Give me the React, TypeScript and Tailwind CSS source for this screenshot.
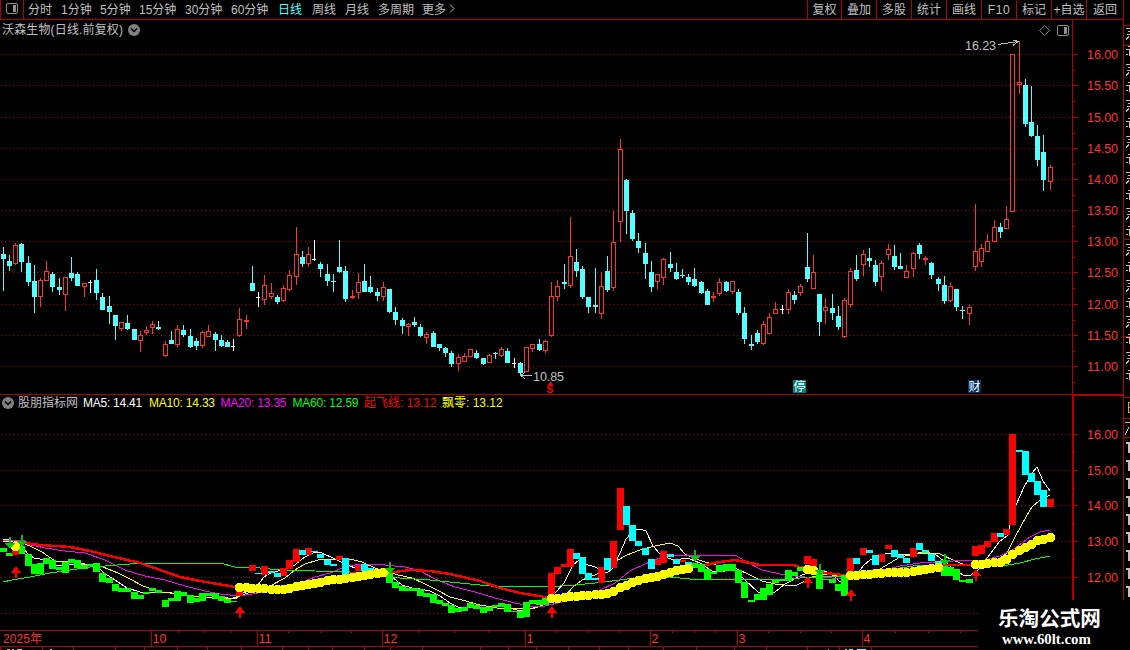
import { Fragment } from 'react';

type Kind = 'up' | 'down' | 'flat';
type Candle = [x: number, high: number, top: number, bottom: number, low: number, kind: Kind];
type Point = [number, number];

const U = 'up';
const D = 'down';
const F = 'flat';

const candles: Candle[] = [
    [3, 247, 254, 259, 291, D], [9, 255, 261, 266, 271, D], [15, 243, 245, 264, 265, U], [21, 243, 244, 262, 272, D],
    [28, 256, 263, 282, 286, D], [34, 265, 281, 297, 313, D], [40, 278, 280, 297, 307, U], [46, 261, 271, 281, 281, U],
    [52, 272, 274, 287, 292, D], [59, 278, 287, 290, 295, D], [65, 277, 277, 295, 311, U], [71, 257, 273, 278, 281, D],
    [77, 272, 274, 286, 286, D], [84, 283, 283, 287, 297, U], [90, 280, 282, 283, 293, F], [96, 269, 280, 293, 300, D],
    [102, 293, 297, 310, 310, D], [109, 296, 306, 312, 324, D], [115, 315, 315, 326, 340, D], [121, 322, 322, 329, 331, U],
    [127, 315, 323, 329, 330, D], [134, 329, 329, 340, 340, D], [140, 331, 335, 341, 352, U], [146, 326, 330, 333, 335, U],
    [152, 321, 324, 328, 334, U], [158, 321, 327, 329, 330, D], [165, 341, 344, 356, 357, U], [171, 331, 340, 344, 344, D],
    [177, 325, 329, 345, 347, U], [183, 325, 330, 335, 337, D], [190, 329, 336, 347, 348, D], [196, 338, 341, 346, 350, D],
    [202, 331, 332, 346, 348, U], [208, 325, 331, 337, 337, U], [215, 332, 334, 340, 351, D], [221, 335, 340, 346, 347, D],
    [227, 340, 342, 347, 347, D], [233, 339, 346, 347, 351, F], [239, 308, 319, 336, 337, U], [246, 315, 320, 322, 329, U],
    [252, 266, 283, 291, 291, D], [258, 292, 297, 298, 307, F], [264, 275, 285, 300, 305, U], [271, 283, 293, 297, 299, U],
    [277, 295, 297, 302, 304, D], [283, 285, 288, 301, 302, U], [289, 270, 275, 290, 291, U], [296, 227, 254, 277, 285, U],
    [302, 251, 257, 264, 267, D], [308, 247, 254, 264, 267, U], [314, 240, 259, 260, 261, F], [320, 262, 264, 269, 277, D],
    [327, 264, 274, 281, 286, D], [333, 274, 281, 282, 292, D], [339, 240, 267, 272, 273, D], [345, 266, 271, 299, 302, D],
    [352, 290, 296, 298, 299, U], [358, 273, 282, 293, 299, U], [364, 264, 281, 292, 292, D], [370, 276, 287, 292, 293, D],
    [377, 288, 292, 296, 301, D], [383, 282, 287, 297, 301, U], [389, 289, 289, 312, 313, D], [395, 307, 312, 320, 325, D],
    [402, 318, 320, 326, 334, D], [408, 323, 324, 327, 336, U], [414, 317, 322, 325, 327, D], [420, 324, 327, 336, 337, D],
    [426, 332, 334, 338, 344, U], [433, 331, 333, 347, 347, D], [439, 344, 344, 348, 351, D], [445, 347, 348, 353, 357, D],
    [451, 351, 353, 364, 367, D], [458, 354, 357, 364, 371, U], [464, 353, 356, 362, 362, U], [470, 349, 349, 357, 357, U],
    [476, 350, 353, 358, 359, D], [483, 358, 358, 364, 365, D], [489, 354, 355, 363, 363, U], [495, 352, 353, 354, 359, D],
    [501, 347, 349, 356, 357, U], [507, 348, 351, 363, 363, D], [514, 358, 363, 364, 368, F], [520, 362, 363, 373, 375, D],
    [526, 347, 347, 372, 372, U], [532, 344, 344, 349, 352, U], [539, 339, 344, 350, 351, D], [545, 340, 341, 351, 353, U],
    [551, 282, 296, 336, 337, U], [557, 280, 286, 297, 301, U], [564, 264, 282, 284, 289, D], [570, 217, 256, 286, 288, U],
    [576, 249, 262, 271, 277, D], [582, 266, 269, 297, 299, D], [588, 297, 297, 307, 313, D], [595, 268, 305, 307, 313, D],
    [601, 272, 286, 314, 319, U], [607, 256, 271, 290, 292, D], [613, 211, 242, 288, 291, U], [620, 139, 149, 222, 242, U],
    [626, 179, 180, 211, 234, D], [632, 210, 213, 239, 241, D], [638, 233, 241, 248, 253, D], [645, 243, 253, 264, 279, D],
    [651, 261, 272, 287, 292, D], [657, 274, 274, 282, 289, U], [663, 258, 259, 278, 285, U], [670, 252, 264, 268, 272, D],
    [676, 263, 272, 279, 280, D], [682, 269, 275, 276, 278, D], [688, 274, 277, 282, 285, D], [694, 268, 279, 286, 287, D],
    [701, 281, 282, 293, 294, D], [707, 289, 291, 305, 305, D], [713, 292, 296, 298, 302, U], [719, 278, 282, 294, 296, U],
    [726, 281, 282, 291, 292, D], [732, 281, 281, 292, 294, U], [738, 289, 292, 313, 315, D], [744, 307, 313, 339, 344, D],
    [751, 335, 344, 346, 350, D], [757, 330, 333, 342, 344, D], [763, 321, 324, 344, 345, U], [769, 313, 317, 334, 334, U],
    [775, 302, 309, 314, 314, U], [782, 305, 309, 310, 314, F], [788, 289, 292, 310, 314, U], [794, 291, 295, 300, 304, D],
    [800, 284, 286, 293, 296, U], [807, 233, 267, 279, 282, D], [813, 255, 272, 289, 289, U], [819, 294, 294, 322, 336, D],
    [825, 298, 307, 311, 324, U], [832, 294, 308, 313, 320, D], [838, 306, 316, 327, 330, D], [844, 298, 300, 337, 338, U],
    [850, 268, 271, 305, 307, U], [856, 255, 270, 279, 281, D], [863, 250, 254, 265, 276, U], [869, 248, 258, 261, 267, D],
    [875, 260, 265, 282, 286, D], [881, 261, 263, 277, 291, U], [888, 244, 249, 255, 260, U], [894, 245, 256, 267, 270, D],
    [900, 253, 266, 269, 269, D], [906, 265, 271, 278, 278, U], [913, 252, 253, 269, 277, U], [919, 243, 245, 254, 259, D],
    [925, 256, 258, 260, 265, U], [931, 262, 263, 275, 279, D], [938, 277, 279, 284, 291, D], [944, 276, 285, 301, 304, D],
    [950, 283, 286, 301, 302, U], [956, 289, 289, 307, 311, D], [962, 306, 310, 311, 319, D], [969, 305, 307, 314, 325, U],
    [975, 204, 251, 267, 271, U], [981, 244, 248, 262, 267, U], [987, 234, 241, 252, 252, U], [994, 220, 227, 242, 242, U],
    [1000, 223, 227, 232, 238, D], [1006, 206, 219, 229, 229, U], [1012, 54, 54, 212, 212, U], [1019, 41, 82, 85, 94, U],
    [1025, 79, 85, 124, 127, D], [1031, 86, 122, 136, 137, D], [1037, 125, 136, 160, 166, D], [1043, 135, 152, 180, 191, D],
    [1050, 165, 167, 182, 190, U],
];

// close-to-close blocks of the indicator pane: x, top, bottom
const greenBlocks = [
    [3, 548, 552], [9, 553, 556], [21, 546, 554], [28, 554, 566], [34, 564, 574], [40, 563, 574], [46, 558, 564], [52, 560, 569],
    [59, 567, 570], [65, 562, 573], [71, 559, 563], [77, 560, 568], [84, 565, 569], [90, 564, 566], [96, 563, 572], [102, 573, 582],
    [109, 578, 583], [115, 584, 591], [121, 588, 592], [127, 588, 592], [134, 592, 599], [140, 595, 599], [146, 592, 594],
    [152, 588, 591], [158, 590, 593], [165, 600, 607], [171, 598, 601], [177, 591, 601], [183, 592, 596], [190, 595, 603],
    [196, 598, 602], [202, 593, 601], [208, 593, 596], [215, 593, 599], [221, 596, 601], [227, 599, 603], [233, 601, 602],
    [389, 573, 583], [395, 582, 588], [402, 586, 591], [408, 588, 591], [414, 588, 591], [420, 589, 596], [426, 593, 597],
    [433, 594, 603], [439, 600, 604], [445, 603, 606], [451, 605, 613], [458, 608, 612], [464, 607, 611], [470, 603, 608],
    [476, 605, 609], [483, 607, 613], [489, 607, 611], [495, 605, 607], [501, 603, 607], [507, 604, 612], [514, 611, 612],
    [520, 611, 618], [526, 602, 617], [532, 600, 604], [539, 600, 605], [545, 598, 605], [694, 563, 568], [701, 564, 572],
    [707, 569, 579], [713, 572, 574], [719, 565, 572], [726, 564, 571], [732, 564, 571], [738, 570, 583], [744, 582, 598],
    [751, 600, 602], [757, 594, 600], [763, 588, 600], [769, 584, 595], [775, 580, 583], [782, 580, 581], [788, 570, 581],
    [794, 572, 576], [800, 567, 571], [819, 572, 589], [825, 579, 580], [832, 579, 583], [838, 584, 591], [844, 575, 596],
    [944, 566, 576], [950, 567, 576], [956, 569, 580], [962, 580, 582], [969, 579, 583],
];
const redBlocks = [
    [15, 548, 555], [239, 588, 596], [252, 565, 571], [264, 566, 575], [283, 568, 576], [289, 560, 569], [296, 549, 562],
    [308, 548, 555], [339, 556, 560], [352, 572, 574], [358, 565, 571], [383, 568, 572], [551, 573, 596], [557, 567, 574],
    [564, 564, 567], [570, 549, 567], [601, 567, 583], [613, 541, 568], [620, 488, 530], [657, 560, 565], [663, 551, 563],
    [682, 560, 562], [807, 556, 564], [813, 559, 568], [850, 558, 572], [863, 548, 555], [881, 554, 562], [888, 545, 549],
    [913, 548, 557], [975, 546, 556], [981, 545, 554], [987, 541, 547], [994, 533, 542], [1006, 529, 535], [1012, 434, 525],
    [1050, 499, 507],
];
const cyanBlocks = [
    [258, 573, 574], [271, 571, 573], [277, 573, 577], [302, 550, 555], [314, 551, 552], [320, 554, 558], [327, 560, 565],
    [333, 564, 566], [345, 558, 575], [364, 564, 571], [370, 568, 571], [377, 570, 573], [576, 553, 559], [582, 557, 574],
    [588, 573, 580], [595, 578, 580], [607, 558, 570], [626, 506, 525], [632, 525, 541], [638, 541, 546], [645, 548, 555],
    [651, 559, 569], [670, 554, 557], [676, 559, 564], [688, 562, 565], [856, 558, 564], [869, 550, 553], [875, 555, 565],
    [894, 550, 557], [900, 555, 558], [906, 558, 563], [919, 543, 550], [925, 550, 553], [931, 554, 561], [938, 561, 565],
    [1000, 533, 537], [1019, 450, 452], [1025, 451, 475], [1031, 473, 482], [1037, 481, 495], [1043, 490, 507],
];

const ma5 = '3,542 10,541 20,544 28,554 34,558 46,560 58,566 78,564 96,565 104,573 115,580 127,588 140,592 165,592 178,594 190,596 202,597 215,597 228,598 236,599 243,593 252,590 258,585 264,577 272,572 285,570 295,565 302,559 310,554 316,552 322,553 333,558 345,564 355,568 365,569 375,570 385,572 392,577 402,585 412,588 420,589 430,591 440,596 450,603 460,608 475,607 490,607 500,605 510,608 520,611 530,609 540,606 548,600 556,592 564,583 573,565 579,560 585,564 595,567 602,571 607,573 613,568 620,553 626,539 634,530 640,529 646,531 653,546 660,554 668,558 676,561 683,558 690,559 700,563 712,571 725,571 735,570 745,580 758,592 765,595 775,592 785,584 800,576 812,571 825,571 835,577 840,582 848,580 856,575 864,565 870,560 878,556 888,553 900,555 912,554 925,552 935,554 945,562 955,570 963,575 970,576 978,570 988,557 1000,541 1007,536 1010,525 1016,505 1024,487 1032,473 1037,467 1043,481 1050,491';
const ma10 = '3,539 20,542 30,546 42,552 55,561 70,562 85,564 103,567 118,573 130,579 143,586 160,592 180,594 200,597 230,599 243,595 255,590 270,586 285,578 295,570 305,564 318,560 335,559 350,559 362,562 375,568 388,572 398,575 412,578 425,584 437,590 450,597 462,600 480,605 497,608 520,609 535,608 545,604 566,595 573,587 582,580 595,575 607,568 618,560 627,555 640,550 655,546 670,543 678,546 685,554 693,558 705,562 720,566 735,568 750,575 762,581 775,584 795,586 803,582 812,577 825,574 840,576 855,573 880,569 890,563 900,557 920,553 940,554 955,561 963,564 975,565 995,562 1007,553 1015,537 1027,515 1032,507 1040,500 1050,495';
const ma20 = '3,540 25,541 27,544 45,548 65,551 85,553 105,560 125,570 145,576 165,580 185,586 205,591 220,594 240,596 258,593 275,590 300,583 315,577 330,573 345,567 360,564 385,565 405,567 420,571 435,579 455,587 475,592 495,598 515,603 530,606 545,606 562,602 575,596 600,590 615,583 630,571 645,564 665,556 680,555 735,555 745,561 762,570 785,575 805,577 858,579 880,571 900,566 920,563 947,562 960,560 985,560 1000,556 1014,549 1030,537 1040,532 1050,530';
const ma60 = '3,582 12,580 30,577 50,573 70,570 90,567 105,566 130,564 150,563 220,563 235,567 250,567 280,570 350,572 380,575 400,578 430,580 460,583 490,586 545,587 575,585 605,582 635,578 670,577 690,579 735,579 780,580 800,578 846,576 860,571 880,571 900,568 920,565 1008,565 1020,563 1035,559 1050,556';
const flyLines = [
    '25,543 40,545 70,547 90,551 110,556 140,563 160,570 180,577 200,581 235,587',
    '383,570 395,572 410,570 430,571 450,574 480,581 500,588 520,593 545,597 551,597',
    '705,565 720,562 735,560 745,562 760,565 793,565 800,567 807,568',
    '823,573 835,574 850,576',
    '940,565 978,565',
];

// each segment gets one dot per candle between its first and last point
const dotSegments: Point[][] = [
    [[15, 546], [16, 546]],
    [[239, 587], [258, 588], [283, 589], [303, 585], [318, 582], [333, 579], [346, 578], [360, 576], [373, 574], [383, 572]],
    [[551, 598], [564, 597], [583, 595], [600, 594], [607, 593], [613, 591], [620, 587], [626, 585], [632, 582], [638, 580], [651, 577], [663, 574], [676, 570], [688, 568]],
    [[807, 569], [813, 570]],
    [[850, 575], [870, 574], [888, 572], [906, 572], [925, 569], [938, 567]],
    [[975, 564], [987, 563], [1000, 562], [1006, 559], [1012, 554], [1019, 550], [1025, 547], [1031, 544], [1037, 540], [1043, 539], [1050, 537]],
];

const buyArrows: Point[] = [[16, 566], [240, 606], [552, 606], [808, 576], [851, 589], [976, 569]];
const sellArrows: Point[] = [[10, 549], [22, 547], [390, 574], [695, 562], [820, 576], [945, 566]];

const priceTicks: [number, string][] = [
    [54, '16.00'], [85, '15.50'], [117, '15.00'], [148, '14.50'], [179, '14.00'], [210, '13.50'],
    [241, '13.00'], [272, '12.50'], [304, '12.00'], [335, '11.50'], [366, '11.00'],
];
const indicatorTicks: [number, string][] = [
    [434, '16.00'], [470, '15.00'], [505, '14.00'], [541, '13.00'], [577, '12.00'], [613, ''],
];
const months: [number, string][] = [[151, '10'], [257, '11'], [382, '12'], [525, '1'], [650, '2'], [737, '3'], [862, '4']];
const weekTicks = [178, 204, 231, 288, 320, 351, 418, 454, 489, 556, 588, 619, 672, 694, 715, 768, 800, 831, 895, 928, 960];
const footTicks = [0, 42, 73, 115, 144, 177, 207, 241, 282, 308, 332, 364, 390, 422, 480, 508, 536, 568, 599, 628, 663, 696, 734, 766, 807, 839, 871];

const periods = [
    { label: '分时', className: 'w-[33px]' },
    { label: '1分钟', className: 'w-[39px]' },
    { label: '5分钟', className: 'w-[39px]' },
    { label: '15分钟', className: 'w-[46px]' },
    { label: '30分钟', className: 'w-[46px]' },
    { label: '60分钟', className: 'w-[47px]' },
    { label: '日线', className: 'w-[34px] text-[#54ffff]' },
    { label: '周线', className: 'w-[33px]' },
    { label: '月线', className: 'w-[33px]' },
    { label: '多周期', className: 'w-[44px]' },
    { label: '更多', className: 'w-[27px]' },
];
const tools = [
    { label: '复权', className: 'w-[34px]' },
    { label: '叠加', className: 'w-[35px]' },
    { label: '多股', className: 'w-[35px]' },
    { label: '统计', className: 'w-[35px]' },
    { label: '画线', className: 'w-[35px]' },
    { label: 'F10', className: 'w-[35px] tracking-[0.6px]' },
    { label: '标记', className: 'w-[35px]' },
    { label: '+自选', className: 'w-[35px]' },
    { label: '返回', className: 'w-[37px]' },
];
const legend = [
    { label: '股朋指标网', className: 'w-[65px] text-[#c0c0c0]' },
    { label: 'MA5: 14.41', className: 'w-[66px] tracking-[-0.25px] text-white' },
    { label: 'MA10: 14.33', className: 'w-[71.5px] tracking-[-0.2px] text-[#ffff00]' },
    { label: 'MA20: 13.35', className: 'w-[72px] tracking-[-0.2px] text-[#ff00ff]' },
    { label: 'MA60: 12.59', className: 'w-[71.5px] tracking-[-0.2px] text-[#00ff00]' },
    { label: '起飞线: 13.12', className: 'w-[78px] text-[#ff0000]' },
    { label: '飘零: 13.12', className: 'text-[#ffff00]' },
];

const candleColor = { up: '#ff3232', down: '#54ffff', flat: '#ffffff' };

function yAt(points: Point[], x: number) {
    for (let i = 1; i < points.length; i++) {
        const [x0, y0] = points[i - 1];
        const [x1, y1] = points[i];
        if (x <= x1) return Math.round(y0 + ((x - x0) / (x1 - x0)) * (y1 - y0));
    }
    return points[points.length - 1][1];
}

function CandleShape({ candle }: { candle: Candle }) {
    const [x, high, top, bottom, low, kind] = candle;
    const color = candleColor[kind];
    const hollow = kind === 'up' && bottom - top > 2;
    return (
        <g fill={color}>
            <rect x={x} y={high} width={1} height={Math.max(low - high, 1)} />
            <rect x={x - 2} y={top} width={kind === 'flat' ? 4 : 5} height={bottom - top} />
            {hollow && <rect x={x - 1} y={top + 1} width={3} height={bottom - top - 2} fill="#000" />}
        </g>
    );
}

function Blocks({ data, color }: { data: number[][]; color: string }) {
    return (
        <g fill={color}>
            {data.map(([x, top, bottom]) => (
                <rect key={x} x={x - 3} y={top} width={7} height={bottom - top} />
            ))}
        </g>
    );
}

function PriceAxis({ ticks, minor }: { ticks: [number, string][]; minor: number }) {
    return (
        <>
            {ticks.map(([y, label]) => (
                <Fragment key={y}>
                    <line x1={1} x2={1072} y1={y + 0.5} y2={y + 0.5} stroke="#b00000" strokeDasharray="1 3" />
                    {label && <rect x={1072} y={y} width={6} height={1} fill="#b00000" />}
                    {y + minor < 600 && <rect x={1072} y={y + minor} width={3} height={1} fill="#b00000" />}
                    {label && (
                        <text x={1087} y={y + 5} fontSize={12.5} fill="#ff3232" textLength={31}>{label}</text>
                    )}
                </Fragment>
            ))}
        </>
    );
}

function PanelIcon({ className }: { className?: string }) {
    return (
        <svg width="12" height="11" viewBox="0 0 12 11" className={className}>
            <rect x="0.5" y="0.5" width="11" height="10" rx="1.5" fill="none" stroke="#909090" />
            <rect x="7" y="2" width="3" height="7" fill="#909090" />
        </svg>
    );
}

function DropIcon() {
    return (
        <svg width="12" height="12" viewBox="0 0 12 12">
            <circle cx="6" cy="6" r="6" fill="#808080" />
            <path d="M3 4.5 L6 7.5 L9 4.5" fill="none" stroke="#000" strokeWidth="1.5" />
        </svg>
    );
}

function Toolbar() {
    return (
        <div className="flex h-[20px] border-b border-[#b00000] leading-[20px] text-[#c0c0c0]">
            <div className="flex w-[24px] items-center justify-center border-x border-[#b00000] pb-[2px]">
                <PanelIcon />
            </div>
            <div className="flex flex-1 pl-[4px]">
                {periods.map((item) => (
                    <span key={item.label} className={item.className}>{item.label}</span>
                ))}
                <svg width="6" height="10" viewBox="0 0 6 10" className="mt-[4px]">
                    <path d="M1 0.5 L5 4.5 L1 8.5" fill="none" stroke="#c0c0c0" />
                </svg>
            </div>
            {tools.map((item) => (
                <div key={item.label} className={`flex justify-center border-l border-[#b00000] ${item.className}`}>{item.label}</div>
            ))}
        </div>
    );
}

function PriceChart() {
    return (
        <svg width="1123" height="354" viewBox="0 40 1123 354" shapeRendering="crispEdges" className="block">
            <PriceAxis ticks={priceTicks} minor={16} />
            <rect x={1072} y={40} width={1} height={354} fill="#b00000" />
            {candles.map((candle) => <CandleShape key={candle[0]} candle={candle} />)}
            <g fill="none" stroke="#c0c0c0">
                <path d="M998 44.5 L1018 41.5 M1012 39.5 L1018 41.5 L1013 45.5" />
                <path d="M532 375.5 H521 M525 372 L521 375.5 L525 379" />
            </g>
            <text x={965} y={50} fontSize={12.5} fill="#c0c0c0" textLength={31}>16.23</text>
            <text x={533} y={381} fontSize={12.5} fill="#c0c0c0" textLength={31}>10.85</text>
            <path d="M550 382 L547 385 H553 Z" fill="#ff0000" />
            <text x={546.5} y={393} fontSize={10} fontWeight="bold" fill="#ff0000">S</text>
            <rect x={793} y={380} width={13} height={13} fill="#008080" />
            <text x={793.5} y={391} fontSize={12} fill="#fff">停</text>
            <rect x={968} y={380} width={13} height={13} fill="#003366" />
            <text x={968.5} y={391} fontSize={12} fill="#fff">财</text>
        </svg>
    );
}

function IndicatorChart() {
    return (
        <svg width="1123" height="218" viewBox="0 412 1123 218" shapeRendering="crispEdges" className="block">
            <PriceAxis ticks={indicatorTicks} minor={18} />
            <rect x={1072} y={412} width={2} height={188} fill="#b00000" />
            <g fill="none">
                <polyline points={ma5} stroke="#fff" />
                <polyline points={ma10} stroke="#ffff00" />
                <polyline points={ma20} stroke="#ff00ff" />
                <polyline points={ma60} stroke="#00ff00" />
                {flyLines.map((points) => <polyline key={points} points={points} stroke="#ff0000" strokeWidth={2.4} />)}
            </g>
            <Blocks data={greenBlocks} color="#00ff00" />
            <Blocks data={redBlocks} color="#ff0000" />
            <Blocks data={cyanBlocks} color="#00ffff" />
            {dotSegments.map((segment) => candles
                .filter(([x]) => x >= segment[0][0] && x <= segment[segment.length - 1][0])
                .map(([x]) => <circle key={x} cx={x + 0.5} cy={yAt(segment, x) + 0.5} r={4.6} fill="#ffff00" />))}
            {buyArrows.map(([x, y]) => (
                <path key={x} d={`M${x} ${y} l5 7 h-4 v5 h-2 v-5 h-4 z`} fill="#ff0000" />
            ))}
            {sellArrows.map(([x, y]) => (
                <path key={x} d={`M${x} ${y} l5 -6 h-4 v-6 h-2 v6 h-4 z`} fill="#00c800" />
            ))}
        </svg>
    );
}

function TimeAxis() {
    return (
        <svg width="978" height="20" viewBox="0 630 978 20" shapeRendering="crispEdges" className="block">
            <g fill="#b00000">
                <rect x={0} y={630} width={978} height={1} />
                <rect x={0} y={646} width={978} height={1} />
                {months.map(([x]) => <rect key={x} x={x} y={631} width={1} height={15} />)}
                {weekTicks.map((x) => <rect key={x} x={x} y={631} width={1} height={2} />)}
                {footTicks.map((x) => <rect key={x} x={x} y={647} width={1} height={3} />)}
            </g>
            <text x={3} y={643} fontSize={12} fill="#ff3232" textLength={39}>2025年</text>
            {months.map(([x, label]) => (
                <text key={x} x={x + 1.5} y={643} fontSize={12.5} fill="#ff3232">{label}</text>
            ))}
            <path d="M7 649.5 h3 m2 0 h2 m3 0 h5 m28 0 h2 M828 649.5 h1 m16 0 h2 m2 0 h4" stroke="#c0c0c0" />
            <path d="M849 649.5 h4 m4 0 h9" stroke="#54ffff" />
        </svg>
    );
}

// the quote list is cut off by the window edge, only its first strokes are seen
function SideStrip() {
    const glyphs = Array.from({ length: 20 }, (_, i) => 28 + i * 18).filter((y) => y < 385);
    return (
        <svg width="7" height="650" viewBox="1123 0 7 650" shapeRendering="crispEdges" className="block">
            <rect x={1123} y={0} width={1} height={395} fill="#b00000" />
            <rect x={1122} y={395} width={2} height={205} fill="#b00000" />
            {[25, 45, 239, 336, 397, 418, 437].map((y) => <rect key={y} x={1124} y={y} width={6} height={1} fill="#b00000" />)}
            {glyphs.map((y, i) => (
                <path
                    key={y}
                    d={i % 2 === 0
                        ? `M1126 ${y + 0.5} h4 M1128 ${y + 3.5} h2 M1127 ${y + 6.5} h3 M1126 ${y + 11.5} l3 -3`
                        : `M1128 ${y + 0.5} h2 M1126 ${y + 3.5} h4 M1129.5 ${y + 3} v7 M1126 ${y + 8.5} h2`}
                    fill="none"
                    stroke="#c0c0c0"
                />
            ))}
            <path d="M1130 402.5 h-2 v10 h2 M1128 407.5 h2" fill="none" stroke="#c0c000" />
            <path d="M1125 422.5 h5 M1125 435 l4 -8" fill="none" stroke="#c0c0c0" />
            {[442, 460, 478, 496, 514, 532, 550, 568, 586].map((y) => (
                <path key={y} d={`M1126 ${y + 1} h3 v10`} fill="none" stroke="#c0c0c0" strokeWidth={2} />
            ))}
        </svg>
    );
}

function App() {
    return (
        <div className="relative flex h-[650px] w-[1130px] overflow-hidden bg-black font-['Liberation_Sans','Noto_Sans_CJK_SC',sans-serif] text-[12px] whitespace-nowrap">
            <div className="flex w-[1123px] flex-col">
                <Toolbar />
                <div className="flex h-[20px] items-center">
                    <div className="flex w-[1072px] items-center pl-[2px] text-[#c0c0c0]">
                        <span className="w-[126px] tracking-[0.15px]">沃森生物(日线.前复权)</span>
                        <DropIcon />
                        <svg width="11" height="11" viewBox="0 0 11 11" className="mr-[7px] ml-auto">
                            <path d="M5.5 0.5 L10.5 5.5 L5.5 10.5 L0.5 5.5 Z" fill="none" stroke="#808080" />
                        </svg>
                        <PanelIcon className="mr-[3px]" />
                    </div>
                    <div className="h-full w-px bg-[#b00000]" />
                </div>
                <PriceChart />
                <div className="flex h-[18px] border-t border-[#b00000]">
                    <div className="flex w-[1072px] items-center pb-px pl-[2px]">
                        <DropIcon />
                        <div className="ml-[4px] flex">
                            {legend.map((item) => <span key={item.label} className={item.className}>{item.label}</span>)}
                        </div>
                    </div>
                    <div className="flex-1 border-t border-l-2 border-[#b00000]" />
                </div>
                <IndicatorChart />
                <TimeAxis />
            </div>
            <SideStrip />
            <div className="absolute top-[600px] left-[978px] flex h-[50px] w-[152px] flex-col bg-black pl-[20px] text-white">
                <span className="pt-[5px] text-[20.6px] leading-[28px] font-bold">乐淘公式网</span>
                <span className="pl-[4px] font-['Liberation_Serif',serif] text-[14.8px] leading-[12px] font-bold">www.60lt.com</span>
            </div>
        </div>
    );
}

export default App;
